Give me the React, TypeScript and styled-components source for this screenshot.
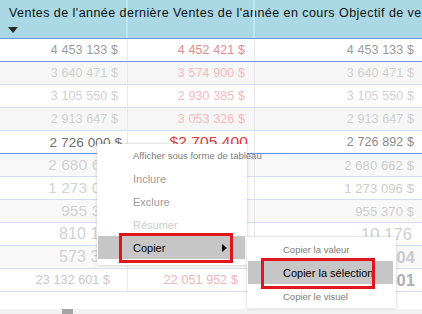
import styled, { createGlobalStyle } from "styled-components";

const GlobalStyle = createGlobalStyle`
  html, body {
    margin: 0;
    padding: 0;
    background: #fff;
  }
  body {
    width: 422px;
    height: 314px;
    overflow: hidden;
    font-family: "Liberation Sans", Arial, sans-serif;
  }
`;

const COLS = "128px 127px 1fr";

const Frame = styled.div`
  position: relative;
  width: 422px;
  height: 314px;
  overflow: hidden;
  background: #fff;
`;

const HeaderRow = styled.div`
  display: grid;
  grid-template-columns: ${COLS};
  height: 38px;
  background: #aad8e4;
  border-bottom: 1px solid #7094dd;
`;

const HeaderCell = styled.div`
  position: relative;
  border-right: 2px solid #c2e4ed;
  &:last-child {
    border-right: none;
  }
`;

const HeaderLabel = styled.div`
  padding: 6px 0 0 9px;
  font-size: 12.5px;
  letter-spacing: 0.45px;
  line-height: 15px;
  color: #111;
  white-space: nowrap;
`;

const SortArrow = styled.div`
  margin: 6px 0 0 8px;
  width: 0;
  height: 0;
  border-left: 5px solid transparent;
  border-right: 5px solid transparent;
  border-top: 6px solid #2a2a2a;
`;

const Row = styled.div<{ $bg: string; $line: string }>`
  display: grid;
  grid-template-columns: ${COLS};
  height: 22px;
  background: ${({ $bg }) => $bg};
  border-bottom: 1px solid ${({ $line }) => $line};
`;

const Cell = styled.div`
  display: flex;
  align-items: center;
  justify-content: flex-end;
  padding-right: 9px;
  border-right: 1px solid #e9e9e9;
  white-space: nowrap;
  &:last-child {
    border-right: none;
    padding-right: 8px;
  }
`;

const Value = styled.span<{
  $size: number;
  $color: string;
  $bold?: boolean;
  $mr?: number;
}>`
  font-size: ${({ $size }) => $size}px;
  color: ${({ $color }) => $color};
  font-weight: ${({ $bold }) => ($bold ? 700 : 400)};
  margin-right: ${({ $mr }) => $mr ?? 0}px;
  letter-spacing: 0.1px;
`;

const Footer = styled.div`
  height: 22px;
  display: flex;
  flex-direction: column;
  justify-content: flex-end;
`;

const ScrollTrack = styled.div`
  height: 5px;
  background: #f2f2f2;
  padding-left: 62px;
`;

const ScrollThumb = styled.div`
  width: 11px;
  height: 5px;
  background: #a4a4a4;
`;

const Menu = styled.div<{ $left: number; $top: number; $width: number }>`
  position: absolute;
  left: ${({ $left }) => $left}px;
  top: ${({ $top }) => $top}px;
  width: ${({ $width }) => $width}px;
  box-sizing: border-box;
  background: #fff;
  box-shadow: 0 0 3px rgba(0, 0, 0, 0.22);
`;

const MainMenu = styled(Menu)`
  padding: 0 2px 6px 1px;
`;

const SubMenu = styled(Menu)`
  padding: 0 3px 0 1px;
`;

type Tone = "hint" | "normal" | "disabled" | "active";

const toneColor: Record<Tone, string> = {
  hint: "#7c7c7c",
  normal: "#9b9b9b",
  disabled: "#cdcdcd",
  active: "#000",
};

const MenuItem = styled.div<{ $tone: Tone; $h: number }>`
  position: relative;
  display: flex;
  align-items: center;
  height: ${({ $h }) => $h}px;
  padding-left: 35px;
  font-size: ${({ $tone }) => ($tone === "hint" ? 9.5 : 11)}px;
  color: ${({ $tone }) => toneColor[$tone]};
  background: ${({ $tone }) => ($tone === "active" ? "#c6c6c6" : "transparent")};
  white-space: nowrap;
`;

const SubArrow = styled.span`
  margin-left: auto;
  margin-right: 18px;
  width: 0;
  height: 0;
  border-top: 4px solid transparent;
  border-bottom: 4px solid transparent;
  border-left: 5px solid #000;
`;

const RedFrame = styled.span<{ $left: number; $h: number }>`
  position: absolute;
  left: ${({ $left }) => $left}px;
  top: -3px;
  width: 114px;
  height: ${({ $h }) => $h}px;
  box-sizing: border-box;
  border: 3px solid #e3151c;
`;

type V = { t: string; c: string; s?: number; b?: boolean; mr?: number };
type R = { bg: string; line: string; cells: [V | null, V | null, V | null] };

const G1 = "#9c9c9c";
const R1 = "#e88a8c";
const GF = "#d0d0d0";
const RF = "#f5baba";
const BLUE = "#7497e0";
const PALE = "#d2dcf3";

const rows: R[] = [
  {
    bg: "#fff",
    line: BLUE,
    cells: [
      { t: "4 453 133 $", c: G1 },
      { t: "4 452 421 $", c: R1 },
      { t: "4 453 133 $", c: G1 },
    ],
  },
  {
    bg: "#f6f6f6",
    line: PALE,
    cells: [
      { t: "3 640 471 $", c: GF },
      { t: "3 574 900 $", c: RF },
      { t: "3 640 471 $", c: GF },
    ],
  },
  {
    bg: "#fff",
    line: PALE,
    cells: [
      { t: "3 105 550 $", c: GF },
      { t: "2 930 385 $", c: RF },
      { t: "3 105 550 $", c: GF },
    ],
  },
  {
    bg: "#f6f6f6",
    line: PALE,
    cells: [
      { t: "2 913 647 $", c: GF },
      { t: "3 053 326 $", c: RF },
      { t: "2 913 647 $", c: GF },
    ],
  },
  {
    bg: "#fff",
    line: "#6c8fe0",
    cells: [
      { t: "2 726 000 $", c: "#6e6e6e", s: 13.5, mr: -4 },
      { t: "$2 705 400", c: "#e23a3a", s: 15.5, mr: -3 },
      { t: "2 726 892 $", c: "#8a8a8a", s: 12.5 },
    ],
  },
  {
    bg: "#f8f8f8",
    line: PALE,
    cells: [
      { t: "2 680 662 $", c: "#d2d2d2", s: 15.5, mr: -13 },
      null,
      { t: "2 680 662 $", c: "#cdcdcd", s: 13 },
    ],
  },
  {
    bg: "#fff",
    line: PALE,
    cells: [
      { t: "1 273 096 $", c: "#d2d2d2", s: 15.5, mr: -13 },
      null,
      { t: "1 273 096 $", c: "#cdcdcd", s: 13 },
    ],
  },
  {
    bg: "#f8f8f8",
    line: PALE,
    cells: [
      { t: "955 370 $", c: "#d2d2d2", s: 15.5, mr: -13 },
      null,
      { t: "955 370 $", c: "#cdcdcd", s: 13 },
    ],
  },
  {
    bg: "#fff",
    line: PALE,
    cells: [
      { t: "810 176 $", c: "#d2d2d2", s: 16, mr: -13 },
      null,
      { t: "10 176", c: "#cfcfcf", s: 16.5, mr: 2 },
    ],
  },
  {
    bg: "#f8f8f8",
    line: PALE,
    cells: [
      { t: "573 304 $", c: "#d2d2d2", s: 16, mr: -13 },
      { t: "$573 500", c: "#f0a4a4", s: 15, mr: -3 },
      { t: "504", c: "#cbcbcb", s: 16.5, b: true, mr: -1 },
    ],
  },
  {
    bg: "#fff",
    line: PALE,
    cells: [
      { t: "23 132 601 $", c: "#c9c9c9", mr: 8 },
      { t: "22 051 952 $", c: "#f4b4b4", mr: 7 },
      { t: "501", c: "#b0b0b0", s: 16.5, b: true, mr: -1 },
    ],
  },
];

export default function App() {
  return (
    <>
      <GlobalStyle />
      <Frame>
        <HeaderRow>
          <HeaderCell>
            <HeaderLabel>
              Ventes de l'année dernière Ventes de l'année en cours Objectif de
              ventes
            </HeaderLabel>
            <SortArrow />
          </HeaderCell>
          <HeaderCell />
          <HeaderCell />
        </HeaderRow>

        {rows.map((row, i) => (
          <Row key={i} $bg={row.bg} $line={row.line}>
            {row.cells.map((v, j) => (
              <Cell key={j}>
                {v && (
                  <Value $size={v.s ?? 12.5} $color={v.c} $bold={v.b} $mr={v.mr}>
                    {v.t}
                  </Value>
                )}
              </Cell>
            ))}
          </Row>
        ))}

        <Footer>
          <ScrollTrack>
            <ScrollThumb />
          </ScrollTrack>
        </Footer>

        <MainMenu $left={97} $top={144} $width={150}>
          <MenuItem $tone="hint" $h={23}>
            Afficher sous forme de tableau
          </MenuItem>
          <MenuItem $tone="normal" $h={23}>
            Inclure
          </MenuItem>
          <MenuItem $tone="normal" $h={23}>
            Exclure
          </MenuItem>
          <MenuItem $tone="disabled" $h={23}>
            Résumer
          </MenuItem>
          <MenuItem $tone="active" $h={23}>
            Copier
            <SubArrow />
            <RedFrame $left={21} $h={30} />
          </MenuItem>
        </MainMenu>

        <SubMenu $left={247} $top={237} $width={149}>
          <MenuItem $tone="hint" $h={24}>
            Copier la valeur
          </MenuItem>
          <MenuItem $tone="active" $h={23}>
            Copier la sélection
            <RedFrame $left={13} $h={31} />
          </MenuItem>
          <MenuItem $tone="hint" $h={24}>
            Copier le visuel
          </MenuItem>
        </SubMenu>
      </Frame>
    </>
  );
}
